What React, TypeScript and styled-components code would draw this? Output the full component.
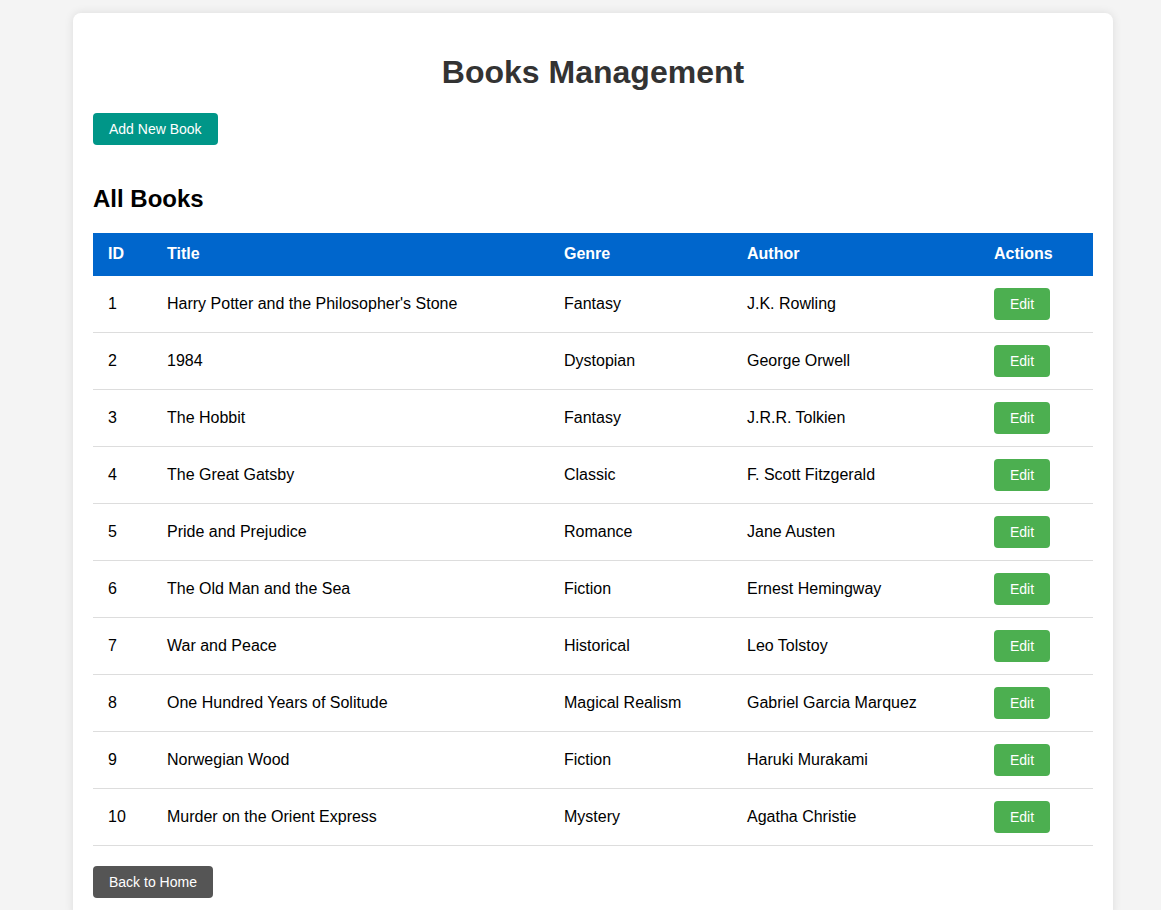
import React from 'react';
import styled, { createGlobalStyle } from 'styled-components';

const GlobalStyle = createGlobalStyle`
  body {
    margin: 0;
    background: #f4f4f4;
    font-family: 'Liberation Sans', Arial, sans-serif;
  }
`;

const Page = styled.div`
  padding: 13px 48px 20px 73px;
`;

const Card = styled.div`
  width: 1000px;
  padding: 20px;
  background: #fff;
  border-radius: 8px;
  box-shadow: 0 0 10px rgba(0, 0, 0, 0.1);
`;

const Title = styled.h1`
  font-size: 32px;
  margin: 21px 0 22px;
  line-height: 37px;
  text-align: center;
  color: #333;
`;

type BtnProps = { $bg: string };

const Button = styled.button<BtnProps>`
  font-family: inherit;
  font-size: 14px;
  line-height: 16px;
  padding: 8px 16px;
  border: 0;
  border-radius: 4px;
  color: #fff;
  background: ${p => p.$bg};
  cursor: pointer;
`;

const SubTitle = styled.h2`
  font-size: 24px;
  line-height: 27px;
  margin: 40px 0 21px;
  color: #000;
`;

const Table = styled.table`
  width: 1000px;
  border-collapse: collapse;
  table-layout: fixed;
`;

// widths are content widths; padding adds 30px to each column
const Th = styled.th<{ $w: number }>`
  width: ${p => p.$w}px;
  background: #0066cc;
  color: #fff;
  text-align: left;
  font-size: 16px;
  line-height: 18px;
  padding: 12px 15px 13px;
  height: 18px;
`;

const Td = styled.td`
  font-size: 16px;
  line-height: 18px;
  padding: 12px 15px;
  color: #000;
  border-bottom: 1px solid #ddd;
  height: 32px;
`;

const Footer = styled.div`
  margin-top: 20px;
`;

const books = [
  [1, "Harry Potter and the Philosopher's Stone", 'Fantasy', 'J.K. Rowling'],
  [2, '1984', 'Dystopian', 'George Orwell'],
  [3, 'The Hobbit', 'Fantasy', 'J.R.R. Tolkien'],
  [4, 'The Great Gatsby', 'Classic', 'F. Scott Fitzgerald'],
  [5, 'Pride and Prejudice', 'Romance', 'Jane Austen'],
  [6, 'The Old Man and the Sea', 'Fiction', 'Ernest Hemingway'],
  [7, 'War and Peace', 'Historical', 'Leo Tolstoy'],
  [8, 'One Hundred Years of Solitude', 'Magical Realism', 'Gabriel Garcia Marquez'],
  [9, 'Norwegian Wood', 'Fiction', 'Haruki Murakami'],
  [10, 'Murder on the Orient Express', 'Mystery', 'Agatha Christie'],
];

export default function App() {
  return (
    <Page>
      <GlobalStyle />
      <Card>
        <Title>Books Management</Title>
        <Button $bg="#009688">Add New Book</Button>
        <SubTitle>All Books</SubTitle>
        <Table>
          <thead>
            <tr>
              <Th $w={29}>ID</Th>
              <Th $w={367}>Title</Th>
              <Th $w={153}>Genre</Th>
              <Th $w={217}>Author</Th>
              <Th $w={84}>Actions</Th>
            </tr>
          </thead>
          <tbody>
            {books.map(b => (
              <tr key={b[0]}>
                <Td>{b[0]}</Td>
                <Td>{b[1]}</Td>
                <Td>{b[2]}</Td>
                <Td>{b[3]}</Td>
                <Td>
                  <Button $bg="#4caf50">Edit</Button>
                </Td>
              </tr>
            ))}
          </tbody>
        </Table>
        <Footer>
          <Button $bg="#555">Back to Home</Button>
        </Footer>
      </Card>
    </Page>
  );
}
